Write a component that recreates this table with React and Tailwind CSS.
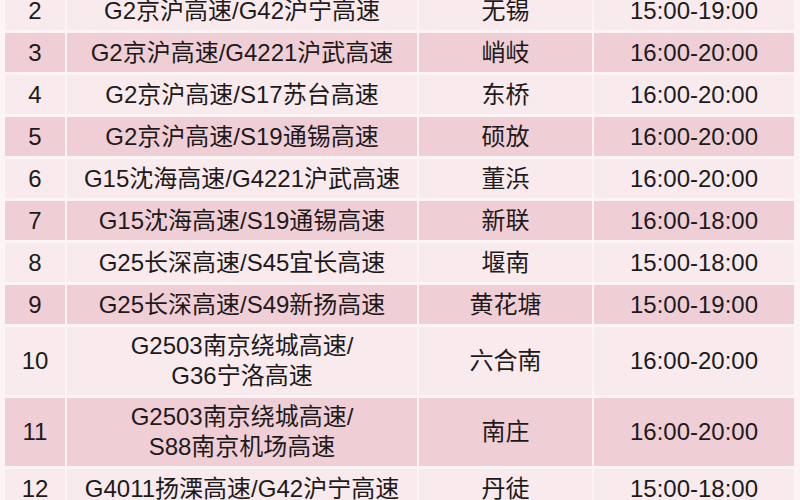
import React from 'react';

const rows = [
  { no: '2', road: ['G2京沪高速/G42沪宁高速'], stop: '无锡', time: '15:00-19:00' },
  { no: '3', road: ['G2京沪高速/G4221沪武高速'], stop: '峭岐', time: '16:00-20:00' },
  { no: '4', road: ['G2京沪高速/S17苏台高速'], stop: '东桥', time: '16:00-20:00' },
  { no: '5', road: ['G2京沪高速/S19通锡高速'], stop: '硕放', time: '16:00-20:00' },
  { no: '6', road: ['G15沈海高速/G4221沪武高速'], stop: '董浜', time: '16:00-20:00' },
  { no: '7', road: ['G15沈海高速/S19通锡高速'], stop: '新联', time: '16:00-18:00' },
  { no: '8', road: ['G25长深高速/S45宜长高速'], stop: '堰南', time: '15:00-18:00' },
  { no: '9', road: ['G25长深高速/S49新扬高速'], stop: '黄花塘', time: '15:00-19:00' },
  { no: '10', road: ['G2503南京绕城高速/', 'G36宁洛高速'], stop: '六合南', time: '16:00-20:00' },
  { no: '11', road: ['G2503南京绕城高速/', 'S88南京机场高速'], stop: '南庄', time: '16:00-20:00' },
  { no: '12', road: ['G4011扬溧高速/G42沪宁高速'], stop: '丹徒', time: '15:00-18:00' },
];

const Cell = ({ pink, tall, children }) => (
  <div
    className={`flex flex-col items-center justify-center text-center leading-[30px] ${
      tall ? 'h-[68px]' : 'h-[39px]'
    } ${pink ? 'bg-[#efcfd5]' : 'bg-[#f8eaed]'}`}
  >
    {children}
  </div>
);

export default function App() {
  return (
    <div
      className="w-[800px] h-[500px] overflow-hidden bg-[#fcf4f5] px-[5px] text-[24px] text-[#1e1a1b]"
      style={{ fontFamily: '"Liberation Sans", "Noto Sans CJK SC", sans-serif' }}
    >
      <div className="-mt-[9px] grid grid-cols-[60px_350px_173px_200px] gap-x-[2px] gap-y-[3px]">
        {rows.map((r, i) => {
          const pink = i % 2 === 1;
          const tall = r.road.length > 1;
          return (
            <React.Fragment key={r.no}>
              <Cell pink={pink} tall={tall}>{r.no}</Cell>
              <Cell pink={pink} tall={tall}>
                {r.road.map((line) => (
                  <span key={line}>{line}</span>
                ))}
              </Cell>
              <Cell pink={pink} tall={tall}>{r.stop}</Cell>
              <Cell pink={pink} tall={tall}>{r.time}</Cell>
            </React.Fragment>
          );
        })}
      </div>
    </div>
  );
}
